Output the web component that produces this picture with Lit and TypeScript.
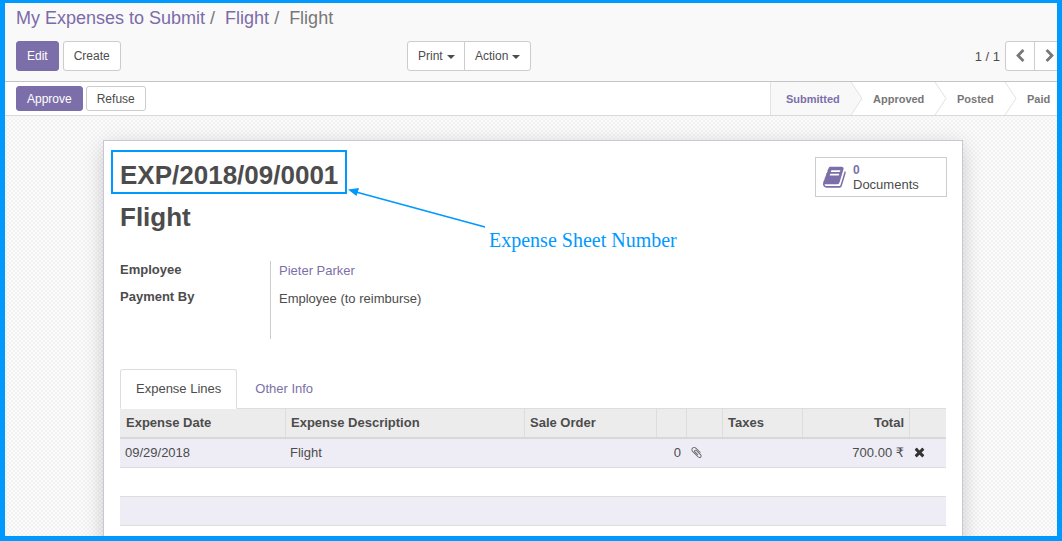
import { LitElement, html, css } from "lit";
import { customElement } from "lit/decorators.js";

@customElement("app-root")
export class AppRoot extends LitElement {
  static styles = css`
    :host { display: block; width: 1062px; height: 541px; overflow: hidden; position: relative; font-family: "Liberation Sans", Arial, sans-serif; font-size: 13px; color: #4c4c4c; }
    * { box-sizing: border-box; }
    .frame { width: 1062px; height: 541px; border: solid #0099ff; border-width: 3px 5px 5px 5px; display: flex; flex-direction: column; overflow: hidden; position: relative; }
    .cp { height: 79px; flex: none; background: #f9f9f9; border-bottom: 1px solid #c4c4c4; padding: 3px 0 0 11px; display: flex; flex-direction: column; }
    .crumbs { font-size: 18px; line-height: 24px; height: 24px; color: #777; white-space: pre; }
    .crumbs a { color: #7c6ba8; }
    .toolbar { display: flex; margin-top: 11px; height: 30px; position: relative; }
    .btn { height: 30px; padding: 0 10px; border: 1px solid #ccc; border-radius: 3px; background: #fff; color: #4c4c4c; font-size: 12px; display: flex; align-items: center; white-space: nowrap; }
    .primary { background: #7c6fa9; border-color: #7c6fa9; color: #fff; }
    .left { display: flex; gap: 4px; width: 391px; }
    .group { display: flex; }
    .group .btn:first-child { border-radius: 3px 0 0 3px; }
    .group .btn:last-child { border-radius: 0 3px 3px 0; margin-left: -1px; }
    .print { width: 58px; }
    .caret { display: inline-block; margin-left: 4px; border-top: 4px solid #4c4c4c; border-left: 4px solid transparent; border-right: 4px solid transparent; margin-top: 1px; }
    .pager { margin-left: auto; margin-right: -7px; display: flex; align-items: center; }
    .count { font-size: 13px; margin-right: 5px; }
    .pg { width: 30px; padding: 0; justify-content: center; }
    .pg svg { width: 14px; height: 14px; fill: #777; }
    .pg + .pg svg { margin-left: 1px; }
    .status { height: 34px; flex: none; background: #fff; border-bottom: 1px solid #d9d9d9; display: flex; justify-content: space-between; padding-left: 11px; }
    .acts { display: flex; gap: 3px; align-items: flex-start; padding-top: 4px; }
    .acts .btn { height: 25px; }
    .bar { display: flex; height: 33px; border-left: 1px solid #e2e2e2; position: relative; width: 287px; font-size: 11px; font-weight: 700; color: #777; }
    .bar svg { position: absolute; left: 0; top: 0; }
    .st { position: absolute; top: 0; line-height: 35px; }
    .cur { color: #7c6fa9; }
    .main { flex: 1; min-height: 0; background-color: #fbfbfb; background-image: conic-gradient(#f2f2f2 25%, transparent 25% 50%, #f2f2f2 50% 75%, transparent 75%); background-size: 4px 4px; padding: 24px 94px 0 98px; }
    .sheet { height: 420px; background: #fff; border: 1px solid #c9c6d8; border-bottom: 0; box-shadow: 0 5px 20px -1px rgba(0,0,0,.2); padding: 0 16px; position: relative; }
    .sheet-inner { width: 826px; }
    h1 { margin: 0; font-size: 26px; font-weight: 700; line-height: 30px; color: #4c4c4c; }
    .name { padding-top: 19px; }
    .title2 { margin-top: 12px; height: 30px; }
    .stat { position: absolute; top: 16px; right: 15px; width: 132px; height: 40px; border: 1px solid #ccc; display: flex; background: #fff; }
    .stat svg { margin: 7px 0 0 7px; width: 24.500px; height: 24.500px; flex: none; fill: #7c6fa9; }
    .stat div { margin-left: 5.500px; padding-top: 5px; font-size: 13px; line-height: 15px; }
    .stat b { display: block; font-size: 12px; color: #7c6fa9; line-height: 14px; }
    .fields { display: flex; margin-top: 29px; height: 78px; }
    .labels { width: 150px; font-weight: 700; font-size: 13px; }
    .labels div { height: 27px; line-height: 17px; }
    .vals { border-left: 1px solid #ccc; padding: 1px 0 0 8px; font-size: 13px; }
    .vals div { height: 27px; line-height: 17px; }
    .vals div:first-child { height: 28px; }
    .vals a { color: #7c6fa9; }
    .tabs { display: flex; margin-top: 30px; height: 39px; position: relative; }
    .tab { height: 40px; padding: 0 15px; line-height: 37px; font-size: 13px; color: #7c6fa9; border: 1px solid transparent; border-radius: 3px 3px 0 0; }
    .tab.on { color: #4c4c4c; background: #fff; border-color: #ddd; border-bottom-color: #fff; position: relative; z-index: 1; }
    .tab + .tab { margin-left: 2px; }
    .row { display: grid; grid-template-columns: 165px 239px 132px 30px 36px 80px 107px 37px; }
    .head { height: 31px; background: #ececec; border-top: 1px solid #ddd; border-bottom: 2px solid #d8d8d8; font-weight: 700; font-size: 13px; line-height: 27px; }
    .head > div { padding: 0 5px; border-left: 1px solid #ddd; height: 28px; }
    .head > div:first-child { border-left: 0; padding-left: 6px; }
    .line { height: 29px; background: #eeedf6; border-bottom: 1px solid #ddd; line-height: 28px; font-size: 13px; }
    .line > div { padding: 0 5px; white-space: nowrap; }
    .r { text-align: right; }
    .rupee { font-family: "DejaVu Sans", sans-serif; }
    .blank { height: 29px; border-bottom: 1px solid #ddd; }
    .lav { background: #eeedf6; }
    .ic { display: flex; align-items: center; height: 28px; }
    .clip { width: 13px; height: 13px; fill: #666; margin: -1px 0 0 -1px; }
    .times { width: 14px; height: 14px; fill: #333; margin-top: -2px; }
    .note { position: absolute; left: 0; top: 0; pointer-events: none; }
    .box { position: absolute; left: 111px; top: 150px; width: 236px; height: 44px; border: 2px solid #0099ff; }
    .arrow { position: absolute; left: 0; top: 0; }
    .label { position: absolute; left: 489px; top: 228px; font-family: "Liberation Serif", serif; font-size: 20px; line-height: 24px; color: #0099ff; white-space: nowrap; }
  `;

  render() {
    const stages = [["Submitted", 16, true], ["Approved", 103, false], ["Posted", 187, false], ["Paid", 257, false]] as const;
    return html`<div class="frame">
      <div class="cp">
        <div class="crumbs"><a>My Expenses to Submit</a> /  <a>Flight</a> /  Flight</div>
        <div class="toolbar">
          <div class="left"><div class="btn primary">Edit</div><div class="btn">Create</div></div>
          <div class="group"><div class="btn print">Print<span class="caret"></span></div><div class="btn">Action<span class="caret"></span></div></div>
          <div class="pager">
            <span class="count">1 / 1</span>
            <div class="group">
              <div class="btn pg"><svg viewBox="0 0 1792 1792"><path d="M1427 301l-531 531 531 531q19 19 19 45t-19 45l-166 166q-19 19-45 19t-45-19l-742-742q-19-19-19-45t19-45l742-742q19-19 45-19t45 19l166 166q19 19 19 45t-19 45z"/></svg></div>
              <div class="btn pg"><svg viewBox="0 0 1792 1792"><path d="M1363 877l-742 742q-19 19-45 19t-45-19l-166-166q-19-19-19-45t19-45l531-531-531-531q-19-19-19-45t19-45l166-166q19-19 45-19t45 19l742 742q19 19 19 45t-19 45z"/></svg></div>
            </div>
          </div>
        </div>
      </div>
      <div class="status">
        <div class="acts"><div class="btn primary">Approve</div><div class="btn">Refuse</div></div>
        <div class="bar">
          <svg width="287" height="33"><path d="M0 0H80L91 16.500 80 33H0Z" fill="#f8f8f8"/><path d="M80 0 91 16.500 80 33M164 0 175 16.500 164 33M234 0 245 16.500 234 33" fill="none" stroke="#e2e2e2"/></svg>
          ${stages.map(([t, x, c]) => html`<span class="st ${c ? "cur" : ""}" style="left:${x - 1}px">${t}</span>`)}
        </div>
      </div>
      <div class="main">
        <div class="sheet">
          <div class="sheet-inner">
            <div class="name"><h1>EXP/2018/09/0001</h1></div>
            <h1 class="title2">Flight</h1>
            <div class="stat">
              <svg viewBox="0 0 1792 1792"><path d="M1639 478q40 57 18 129l-275 906q-19 64-76.500 107.500t-122.500 43.500h-923q-77 0-148.500-53.500t-99.500-131.500q-24-67-2-127 0-4 3-27t4-37q1-8-3-21.500t-3-19.500q2-11 8-21t16.500-23.500 16.500-23.500q23-38 45-91.500t30-91.500q3-10 .5-30t-.5-28q3-11 17-28t17-23q21-36 42-92t25-90q1-9-2.500-32t.5-28q4-13 22-30.500t22-22.500q19-26 42.500-84.500t27.500-96.500q1-8-3-25.500t-2-26.500q2-8 9-18t18-23 17-21q8-12 16.500-30.500t15-35 16-36 19.500-32 26.500-23.500 36-11.500 47.500 5.500l-1 3q38-9 51-9h761q74 0 114 56t18 130l-274 906q-36 119-71.500 153.500t-128.500 34.500h-869q-27 0-38 15-11 16-1 43 24 70 144 70h923q29 0 56-15.500t35-41.500l300-987q7-22 5-57 38 15 59 43zm-1064 2q-4 13 2 22.500t20 9.500h608q13 0 25.500-9.500t16.500-22.500l21-64q4-13-2-22.500t-20-9.500h-608q-13 0-25.500 9.500t-16.500 22.500zm-83 256q-4 13 2 22.500t20 9.500h608q13 0 25.500-9.500t16.500-22.500l21-64q4-13-2-22.500t-20-9.500h-608q-13 0-25.500 9.500t-16.500 22.500z"/></svg>
              <div><b>0</b>Documents</div>
            </div>
            <div class="fields">
              <div class="labels"><div>Employee</div><div>Payment By</div></div>
              <div class="vals"><div><a>Pieter Parker</a></div><div>Employee (to reimburse)</div></div>
            </div>
            <div class="tabs"><div class="tab on">Expense Lines</div><div class="tab">Other Info</div></div>
            <div class="row head"><div>Expense Date</div><div>Expense Description</div><div>Sale Order</div><div></div><div></div><div>Taxes</div><div class="r">Total</div><div></div></div>
            <div class="row line">
              <div>09/29/2018</div><div>Flight</div><div></div><div class="r">0</div>
              <div class="ic"><svg class="clip" viewBox="0 0 1792 1792"><path d="M1596 1385q0 117-79 196t-196 79q-135 0-235-100l-777-776q-113-115-113-271 0-159 110-270t269-111q158 0 273 113l605 606q10 10 10 22 0 16-30.500 46.500t-46.500 30.500q-13 0-23-10l-606-607q-79-77-181-77-106 0-179 75t-73 181q0 105 76 181l776 777q63 63 145 63 64 0 106-42t42-106q0-82-63-145l-581-581q-26-24-60-24-29 0-48 19t-19 48q0 32 25 59l410 410q10 10 10 22 0 16-31 47t-47 31q-12 0-22-10l-410-410q-63-61-63-149 0-82 57-139t139-57q88 0 149 63l581 581q100 98 100 235z"/></svg></div>
              <div></div>
              <div class="r">700.00 <span class="rupee">₹</span></div>
              <div class="ic"><svg class="times" viewBox="0 0 1792 1792"><path d="M1298 1322q0 40-28 68l-136 136q-28 28-68 28t-68-28l-294-294-294 294q-28 28-68 28t-68-28l-136-136q-28-28-28-68t28-68l294-294-294-294q-28-28-28-68t28-68l136-136q28-28 68-28t68 28l294 294 294-294q28-28 68-28t68 28l136 136q28 28 28 68t-28 68l-294 294 294 294q28 28 28 68z"/></svg></div>
            </div>
            <div class="blank"></div>
            <div class="blank lav"></div>
          </div>
        </div>
      </div>
    </div>
    <div class="note">
      <div class="box"></div>
      <svg class="arrow" width="1062" height="541"><path d="M485 227 356 192" stroke="#0099ff" stroke-width="1.800"/><path d="M348 189.500 359 188 356.500 196Z" fill="#0099ff"/></svg>
      <div class="label">Expense Sheet Number</div>
    </div>`;
  }
}
